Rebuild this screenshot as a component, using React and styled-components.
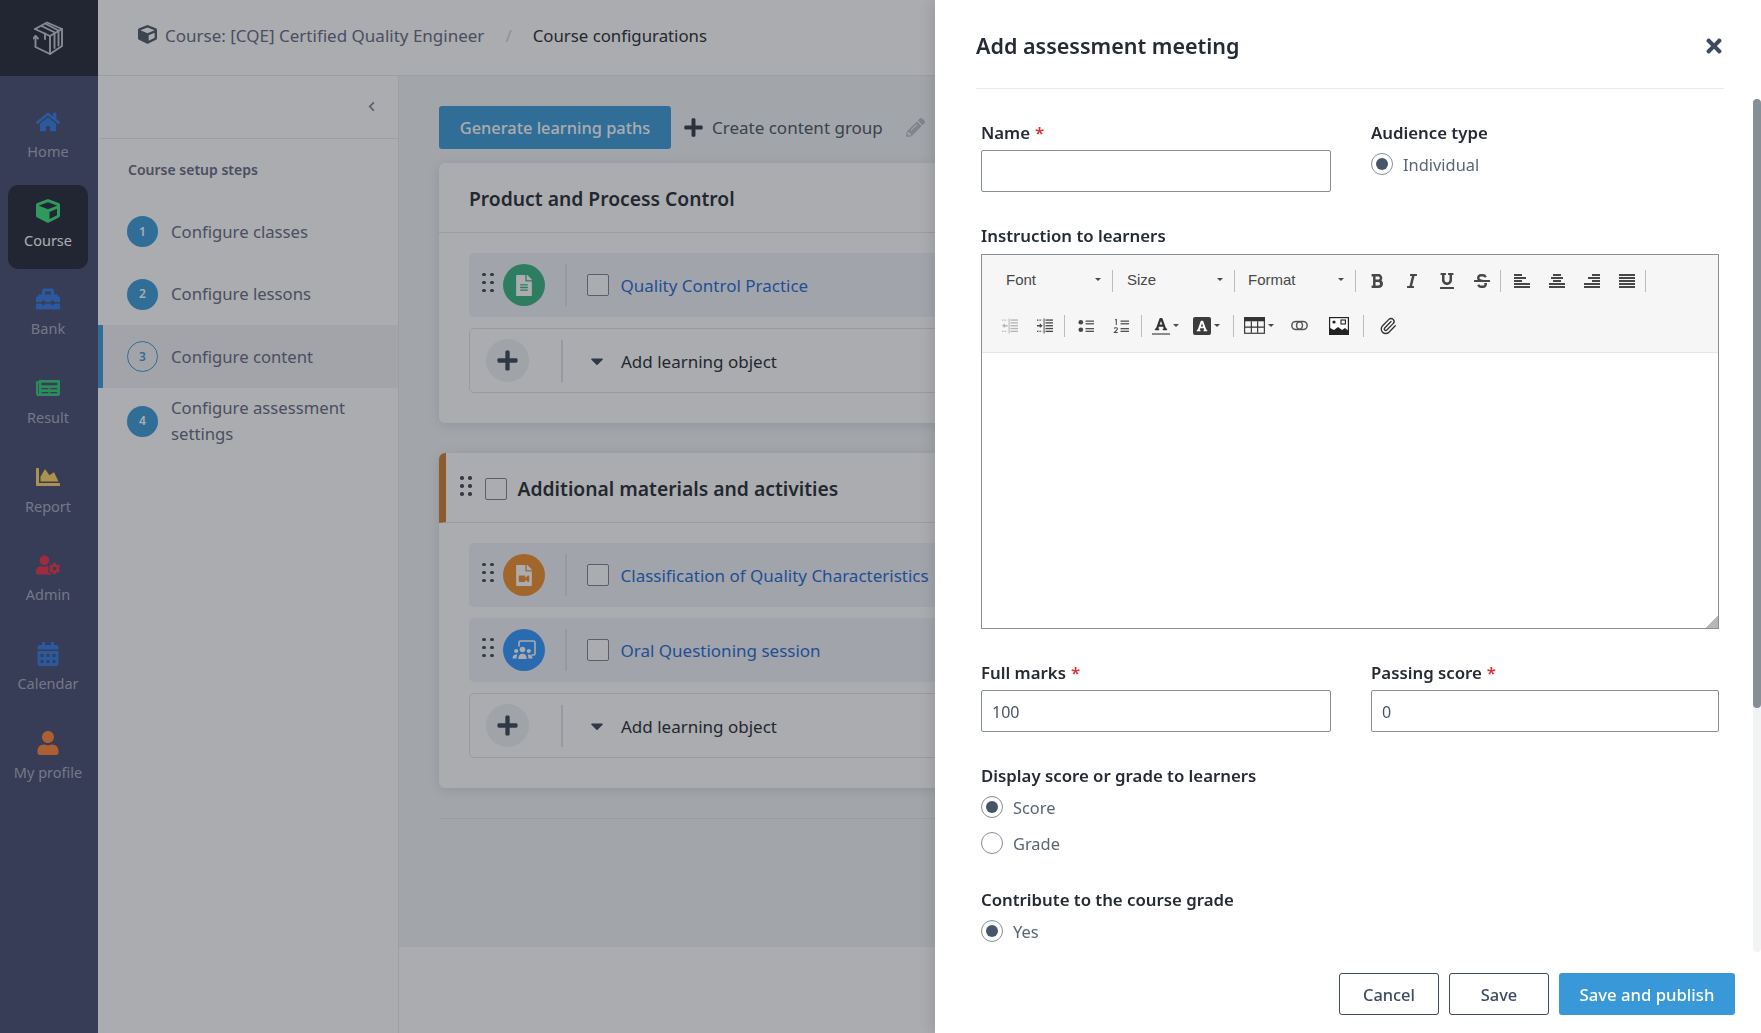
import React from 'react';
import styled, { createGlobalStyle } from 'styled-components';
import { Paperclip } from 'lucide-react';
import {
  FaHome, FaCube, FaToolbox, FaNewspaper, FaChartArea, FaUserCog, FaCalendarAlt, FaUser,
  FaChevronLeft, FaPlus, FaPencilAlt, FaFileAlt, FaFileVideo, FaCaretDown, FaTimes,
  FaBold, FaItalic, FaUnderline, FaStrikethrough, FaFont,
} from 'react-icons/fa';

const Global = createGlobalStyle`
  html, body { margin: 0; height: 100%; overflow: hidden; background: #fff; }
  #root { height: 100%; }
  * { box-sizing: border-box; }
  body { font-family: "Noto Sans", sans-serif; color: #252a33; }
`;

const Page = styled.div`display: flex; height: 1033px; width: 100%; overflow: hidden;`;

const Sidebar = styled.nav`width: 98px; flex: none; background: #464c71; display: flex; flex-direction: column;`;
const LogoBox = styled.div`height: 76px; background: #232737; display: flex; align-items: center; justify-content: center; padding-right: 1px;`;
const NavList = styled.div`display: flex; flex-direction: column; gap: 4.7px; padding: 20.5px 10px 0 8px;`;
const NavItem = styled.div`
  height: 84px; border-radius: 10px; display: flex; flex-direction: column; align-items: center;
  padding-top: 13.4px; gap: 5px; white-space: nowrap;
  background: ${p => (p.$active ? '#232737' : 'transparent')};
  color: ${p => (p.$active ? '#fff' : '#a5abc0')};
  font-size: 14.5px; line-height: 24px;
  svg { width: 24px; height: 24px; color: ${p => p.$color}; }
`;

const Right = styled.div`flex: 1; min-width: 0; display: flex; flex-direction: column;`;
const Topbar = styled.header`
  height: 76px; flex: none; border-bottom: 1px solid #e6e8eb; display: flex; align-items: center;
  padding: 0 0 4px 40px; font-size: 17px; color: #636982; white-space: nowrap;
`;
const CrumbIcon = styled(FaCube)`width: 19px; height: 19px; color: #4b5768; margin: -3px 8px 0 0;`;
const CrumbSlash = styled.span`margin: 0 21px; color: #cfd2d6;`;
const CrumbCurrent = styled.span`color: #252a33; font-size: 16.8px;`;

const Body = styled.div`flex: 1; display: flex; min-height: 0;`;
const Steps = styled.aside`width: 301px; flex: none; border-right: 1px solid #e6e8eb;`;
const CollapseBar = styled.div`
  height: 63px; margin-left: 2px; border-bottom: 1px solid #e6e8eb; display: flex; align-items: center;
  justify-content: flex-end; padding: 0 22px 2px 0; color: #7f8494;
  svg { width: 9px; height: 11px; }
`;
const StepsTitle = styled.div`padding: 19px 0 0 30px; font-size: 14px; line-height: 24px; font-weight: 600; color: #636982; height: 61.6px;`;
const StepRow = styled.div`
  min-height: ${p => (p.$tall ? 67 : 62.4)}px; display: flex; align-items: center; gap: 13px; font-size: 16.7px;
  line-height: 26px; color: #636982; padding-right: 30px;
  background: ${p => (p.$active ? '#f2f3f5' : 'transparent')};
  border-left: ${p => (p.$active ? '5px solid #3999d8' : '0')};
  padding-left: ${p => (p.$active ? '24px' : '29px')};
`;
const StepDot = styled.span`
  width: 31px; height: 31px; flex: none; border-radius: 50%; display: flex; align-items: center; justify-content: center;
  font-size: 12px; font-weight: 600;
  background: ${p => (p.$outline ? 'transparent' : '#3999d8')};
  color: ${p => (p.$outline ? '#3999d8' : '#fff')};
  border: ${p => (p.$outline ? '1px solid #3999d8' : '0')};
`;

const Main = styled.main`flex: 1; min-width: 0; display: flex; flex-direction: column;`;
const Work = styled.div`height: 871px; flex: none; background: #f1f4f7; padding: 30px 40px 0;`;
const Toolbar = styled.div`display: flex; align-items: center; height: 43px; margin-bottom: 14px;`;
const PrimaryBtn = styled.button`
  width: 232px; height: 43px; border: 0; border-radius: 3px; background: #3999d8; color: #fff; padding: 0;
  font: 500 16.4px "Noto Sans", sans-serif; white-space: nowrap; flex: none;
`;
const GhostAction = styled.span`
  display: inline-flex; align-items: center; gap: 8px; margin-left: 12px; font-size: 17px; color: #495464; white-space: nowrap;
  svg { width: 21px; height: 21px; color: #303b4d; }
`;
const PencilIcon = styled(FaPencilAlt)`width: 19px; height: 19px; margin-left: 23px; color: #bbbfc5; flex: none;`;
const Card = styled.section`
  background: #fff; border-radius: 6px; box-shadow: 0 2px 12px rgba(40,45,60,.13); margin-bottom: 30px; overflow: hidden;
`;
const CardHead = styled.div`
  height: 70px; border-bottom: 1px solid #e4e6ea; display: flex; align-items: center; padding: 2px 0 0 30px;
  font-size: 19.3px; font-weight: 600; color: #252a33; white-space: nowrap;
  ${p => p.$accent && `border-left: 7px solid #d17e2d; padding-left: 14px;`}
`;
const CardBody = styled.div`padding: 20px 0 30px 30px; display: flex; flex-direction: column; gap: 11px;`;
const ItemRow = styled.div`
  height: 64px; border-radius: 5px; background: #f0f3fa; display: flex; align-items: center; padding-left: 13px;
  font-size: 17px; color: #1e69d3; white-space: nowrap;
`;
const Dots = styled.span`
  display: grid; grid-template-columns: 3.5px 3.5px; column-gap: 4.5px; row-gap: 4.5px; flex: none; margin-top: -5px;
  margin-right: ${p => p.$mr ?? 9}px;
  i { width: 3.5px; height: 3.5px; border-radius: 50%; background: #40465a; display: block; }
`;
const KindCircle = styled.span`
  width: 42px; height: 42px; border-radius: 50%; background: ${p => p.$color}; flex: none;
  display: flex; align-items: center; justify-content: center; color: #fff;
  svg { width: 16px; height: 21px; }
`;
const Sep = styled.span`width: 2px; height: 42px; background: #dde0e6; flex: none; margin: 0 ${p => p.$r}px 0 ${p => p.$l}px;`;
const Check = styled.span`
  width: 22px; height: 22px; border: 1px solid #7c8592; border-radius: 2px; background: #fff; flex: none; margin-right: ${p => p.$mr ?? 11}px;
`;
const AddRow = styled.div`
  height: 65px; border: 1px solid #e0e3e8; border-radius: 5px; display: flex; align-items: center; padding: 1px 0 0 16px;
  font-size: 17px; color: #252a33; white-space: nowrap;
`;
const AddCircle = styled.span`
  width: 43px; height: 43px; border-radius: 50%; background: #eef0f4; flex: none; display: flex; align-items: center; justify-content: center;
  color: #364556; margin-top: -1px; svg { width: 23px; height: 23px; }
`;
const CaretIcon = styled(FaCaretDown)`width: 20px; height: 20px; color: #364556; margin-right: 14px; flex: none;`;
const Rule = styled.div`height: 1px; background: #e4e6ea;`;

const Backdrop = styled.div`position: fixed; inset: 0; background: rgba(33,37,44,.38); z-index: 5;`;
const Drawer = styled.aside`
  position: fixed; top: 0; right: 0; bottom: 0; width: 826px; background: #fff; z-index: 6; display: flex; flex-direction: column;
  box-shadow: -4px 0 12px rgba(0,0,0,.1);
`;
const DrawerHead = styled.div`
  height: 89px; flex: none; margin: 0 37px 0 41px; border-bottom: 1px solid #e9ecef; display: flex; align-items: center;
  justify-content: space-between; padding: 3px 0 0 0;
`;
const DrawerTitle = styled.h2`margin: 0; font-size: 21.5px; font-weight: 600; color: #252a33;`;
const CloseIcon = styled(FaTimes)`width: 22px; height: 22px; color: #3d4b5c; margin-right: -1px;`;
const BodyWrap = styled.div`flex: 1; min-height: 0; position: relative; overflow: hidden;`;
const DrawerBody = styled.div`padding: 32px 42px 0 46px;`;
const ScrollTrack = styled.div`position: absolute; top: 10px; bottom: 0; right: 0; width: 8px; background: #f1f3f5; border-radius: 4px;`;
const ScrollThumb = styled.div`height: 609px; background: #868e96; border-radius: 4px;`;
const TwoCols = styled.div`display: grid; grid-template-columns: 350px 348px; column-gap: 40px; margin-top: ${p => p.$mt || 0}px;`;
const Label = styled.div`font-size: 16.8px; line-height: 24px; font-weight: 600; color: #252a33; margin-bottom: ${p => p.$mb ?? 5}px; margin-top: ${p => p.$mt || 0}px; white-space: nowrap;`;
const Req = styled.span`color: #e03131; margin-left: 5px;`;
const Input = styled.input`
  display: block; width: 100%; height: 42px; border: 1px solid #868e96; border-radius: 2px; padding: 2px 10px 0;
  font: 16px "Noto Sans", sans-serif; color: #495464; background: #fff; outline: 0;
`;
const RadioRow = styled.label`display: flex; align-items: center; gap: 10px; height: 36px; font-size: 16.4px; color: #5a6573;`;
const RadioMark = styled.span`
  width: 22px; height: 22px; border-radius: 50%; border: 1px solid #868e96; display: flex; align-items: center; justify-content: center; flex: none;
  &::after { content: ''; width: 12px; height: 12px; border-radius: 50%; background: ${p => (p.$on ? '#475569' : 'transparent')}; }
`;

const Editor = styled.div`border: 1px solid #868e96; height: 375px; position: relative;`;
const EdToolbar = styled.div`height: 98px; background: #f6f6f6; border-bottom: 1px solid #e5e5e5; padding-top: 3px;`;
const EdRow = styled.div`height: 45px; display: flex; align-items: center; padding-left: ${p => p.$pl}px;`;
const Combo = styled.span`
  width: ${p => p.$w}px; display: flex; align-items: center; justify-content: space-between; padding: 0 11px 3px ${p => p.$pl}px;
  font: 15px "Liberation Sans", Arial, sans-serif; color: #484848;
  &::after { content: ''; border-left: 3px solid transparent; border-right: 3px solid transparent; border-top: 3px solid #484848; }
`;
const EdSep = styled.span`width: 1px; height: 22px; background: #bcbcbc; flex: none; margin: 0 ${p => p.$r ?? 0}px 0 ${p => p.$l ?? 0}px;`;
const EdBtn = styled.span`
  width: ${p => p.$w || 35}px; height: 26px; flex: none; display: flex; align-items: center; justify-content: center; gap: 3px;
  color: ${p => p.$color || '#474747'}; svg { flex: none; height: ${p => p.$s || 16}px; width: ${p => p.$sw || p.$s || 16}px; }
`;
const MiniCaret = styled.span`border-left: 3px solid transparent; border-right: 3px solid transparent; border-top: 3px solid #484848;`;
const ColorA = styled.span`
  display: flex; flex-direction: column; align-items: center; width: 18px; color: #333;
  border-bottom: 2px solid #8a8a8a; padding-bottom: 2px;
  svg { width: 14px; height: 14px; }
`;
const BgA = styled.span`
  width: 18px; height: 18px; background: #3c3c3c; border-radius: 2px; display: flex; align-items: center; justify-content: center; color: #fff;
  svg { width: 12px; height: 12px; }
`;
const Resizer = styled.span`
  position: absolute; right: 0; bottom: 0; width: 12px; height: 12px;
  background: linear-gradient(135deg, transparent 50%, #b7b7b7 50%);
`;
const Footer = styled.div`height: 81px; flex: none; display: flex; justify-content: flex-end; gap: 10px; padding: 21px 26px 0 0;`;
const OutlineBtn = styled.button`
  width: 100px; height: 42px; background: #fff; border: 1px solid #3d4b5c; border-radius: 3px; color: #3d4b5c;
  font: 500 16.4px "Noto Sans", sans-serif;
`;
const SolidBtn = styled.button`
  width: 176px; height: 42px; background: #3999d8; border: 0; border-radius: 3px; color: #fff;
  font: 500 16.7px "Noto Sans", sans-serif;
`;

function Logo() {
  return (
    <svg width="32" height="36" viewBox="8 6 32 36" fill="none" stroke="#c4c8d2" strokeWidth="1.9" strokeLinejoin="round" strokeLinecap="round">
      <path d="M10 15 L22 8.5 L37 15 V32 L25 40 L10.5 33 V22" />
      <path d="M10 15 L25 22 L37 15" />
      <path d="M25 22 V40" />
      <path d="M16.5 12 L30 18.5 M21 10 L33.5 16.5" />
      <path d="M20 19.5 V25 M29.5 20 V34 M33.5 17.5 V31.5" />
      <path d="M8.5 24.5 L10.5 22 L13 24.5" />
    </svg>
  );
}

function Grip({ mr }) {
  return <Dots $mr={mr}><i /><i /><i /><i /><i /><i /></Dots>;
}

function MeetingIcon() {
  return (
    <svg viewBox="0 0 24 20" fill="#fff" style={{ width: 24, height: 20 }}>
      <path d="M7 6.5 V2.5 A1.5 1.5 0 0 1 8.5 1 H21.5 A1.5 1.5 0 0 1 23 2.5 V13.5 A1.5 1.5 0 0 1 21.5 15 H19.5" fill="none" stroke="#fff" strokeWidth="1.6" />
      <circle cx="4.2" cy="11" r="2.1" />
      <circle cx="10.5" cy="9.5" r="2.8" />
      <circle cx="16.8" cy="11" r="2.1" />
      <path d="M6.2 19 c0-3.4 1.8-5.2 4.3-5.2 s4.3 1.8 4.3 5.2 Z" />
      <path d="M0.5 18.5 c0-2.6 1.4-4 3.7-4 .5 0 .9.1 1.2.2 C4.7 15.8 4.6 17 4.6 18.5 Z" />
      <path d="M20.5 18.5 c0-2.6-1.4-4-3.7-4 -.5 0-.9.1-1.2.2 .7 1.1.8 2.3.8 3.8 Z" />
    </svg>
  );
}

function AlignIcon({ kind }) {
  const widths = [8, 12, 8, 16, 16];
  const rows = kind === 'justify' ? [16, 16, 16, 16, 16] : widths;
  const xOf = w => (kind === 'center' ? (16 - w) / 2 : kind === 'right' ? 16 - w : 0);
  return (
    <svg viewBox="0 0 16 16" fill="currentColor">
      {rows.map((w, i) => <rect key={i} x={xOf(w)} y={1 + i * 3} width={w} height="2" />)}
    </svg>
  );
}

function IndentIcon({ out }) {
  return (
    <svg viewBox="0 0 17 16" fill="currentColor">
      {[1, 4, 7, 10, 13].map(y => <rect key={y} x="9" y={y} width="8" height="1.4" />)}
      <rect x="7" y="0" width="1" height="16" />
      <path d="M0 1.7h5.5M0 13.7h5.5" stroke="currentColor" strokeWidth="1.3" strokeDasharray="1.4 1.2" />
      <path d={out ? 'M0 7.7 L3 5.2 V7 H6 V8.4 H3 V10.2 Z' : 'M6 7.7 L3 5.2 V7 H0 V8.4 H3 V10.2 Z'} />
    </svg>
  );
}

function BulletIcon() {
  return (
    <svg viewBox="0 0 17 16" fill="currentColor">
      <circle cx="3" cy="4" r="2.5" /><circle cx="3" cy="12" r="2.5" />
      <rect x="8" y="2.2" width="9" height="1.3" /><rect x="8" y="5" width="9" height="1.3" />
      <rect x="8" y="10.2" width="9" height="1.3" /><rect x="8" y="13" width="9" height="1.3" />
    </svg>
  );
}

function NumberIcon() {
  return (
    <svg viewBox="0 0 17 16" fill="currentColor">
      <path d="M2 1.5 L3.5 1 V7 M1 10.5 C2 9.5 5 9.5 4.6 11.5 L1.4 15 H5" fill="none" stroke="currentColor" strokeWidth="1.1" />
      <rect x="8" y="2.2" width="9" height="1.3" /><rect x="8" y="5" width="9" height="1.3" />
      <rect x="8" y="10.2" width="9" height="1.3" /><rect x="8" y="13" width="9" height="1.3" />
    </svg>
  );
}

function TableIcon() {
  return (
    <svg viewBox="0 0 20 16" fill="none" stroke="#333" strokeWidth="1.1">
      <rect x="0.6" y="0.6" width="18.8" height="14.8" />
      <rect x="0" y="0" width="20" height="4" fill="#333" stroke="none" />
      <path d="M7 4 V15 M13 4 V15 M1 9.5 H19" />
    </svg>
  );
}

function LinkIcon() {
  return (
    <svg viewBox="0 0 16 10" fill="none" stroke="#555" strokeWidth="1.4">
      <rect x="0.8" y="1.2" width="10" height="7.6" rx="3.8" />
      <rect x="5.2" y="1.2" width="10" height="7.6" rx="3.8" />
    </svg>
  );
}

function PictureIcon() {
  return (
    <svg viewBox="0 0 20 18">
      <rect x="0.6" y="0.6" width="18.8" height="16.8" fill="#fff" stroke="#222" strokeWidth="1.2" />
      <circle cx="5" cy="5" r="1.6" fill="#222" />
      <rect x="12" y="3" width="4.4" height="4" fill="none" stroke="#222" strokeWidth="1.1" />
      <path d="M1 16.6 V11 L5 13 L9 10 L13 13 L16 11 L19 13.5 V17.4 H1 Z" fill="#222" />
    </svg>
  );
}

const navItems = [
  ['Home', FaHome, '#317ae2'],
  ['Course', FaCube, '#38e27c', true],
  ['Bank', FaToolbox, '#317ae2'],
  ['Result', FaNewspaper, '#32cb78'],
  ['Report', FaChartArea, '#ffd561'],
  ['Admin', FaUserCog, '#ee3049'],
  ['Calendar', FaCalendarAlt, '#317ae2'],
  ['My profile', FaUser, '#ff8438'],
];

export default function App() {
  return (
    <>
      <Global />
      <Page>
        <Sidebar>
          <LogoBox><Logo /></LogoBox>
          <NavList>
            {navItems.map(([label, Icon, color, active]) => (
              <NavItem key={label} $active={active} $color={color}><Icon />{label}</NavItem>
            ))}
          </NavList>
        </Sidebar>
        <Right>
          <Topbar>
            <CrumbIcon />
            <span>Course: [CQE] Certified Quality Engineer</span>
            <CrumbSlash>/</CrumbSlash>
            <CrumbCurrent>Course configurations</CrumbCurrent>
          </Topbar>
          <Body>
            <Steps>
              <CollapseBar><FaChevronLeft /></CollapseBar>
              <StepsTitle>Course setup steps</StepsTitle>
              <StepRow><StepDot>1</StepDot>Configure classes</StepRow>
              <StepRow><StepDot>2</StepDot>Configure lessons</StepRow>
              <StepRow $active><StepDot $outline>3</StepDot>Configure content</StepRow>
              <StepRow $tall><StepDot>4</StepDot>Configure assessment settings</StepRow>
            </Steps>
            <Main>
              <Work>
                <Toolbar>
                  <PrimaryBtn>Generate learning paths</PrimaryBtn>
                  <GhostAction><FaPlus />Create content group</GhostAction>
                  <PencilIcon />
                </Toolbar>
                <Card>
                  <CardHead>Product and Process Control</CardHead>
                  <CardBody>
                    <ItemRow>
                      <Grip />
                      <KindCircle $color="#38b381"><FaFileAlt /></KindCircle>
                      <Sep $l={20} $r={20} />
                      <Check $mr={12} />Quality Control Practice
                    </ItemRow>
                    <AddRow>
                      <AddCircle><FaPlus /></AddCircle>
                      <Sep $l={32} $r={24} />
                      <CaretIcon />Add learning object
                    </AddRow>
                  </CardBody>
                </Card>
                <Card>
                  <CardHead $accent>
                    <Grip mr={13} />
                    <Check $mr={11} />Additional materials and activities
                  </CardHead>
                  <CardBody>
                    <ItemRow>
                      <Grip />
                      <KindCircle $color="#ee8f2d"><FaFileVideo /></KindCircle>
                      <Sep $l={20} $r={20} />
                      <Check $mr={12} />Classification of Quality Characteristics
                    </ItemRow>
                    <ItemRow>
                      <Grip />
                      <KindCircle $color="#3096ff"><MeetingIcon /></KindCircle>
                      <Sep $l={20} $r={20} />
                      <Check $mr={12} />Oral Questioning session
                    </ItemRow>
                    <AddRow>
                      <AddCircle><FaPlus /></AddCircle>
                      <Sep $l={32} $r={24} />
                      <CaretIcon />Add learning object
                    </AddRow>
                  </CardBody>
                </Card>
                <Rule />
              </Work>
            </Main>
          </Body>
        </Right>
      </Page>
      <Backdrop />
      <Drawer>
        <DrawerHead>
          <DrawerTitle>Add assessment meeting</DrawerTitle>
          <CloseIcon />
        </DrawerHead>
        <BodyWrap>
          <DrawerBody>
            <TwoCols>
              <div>
                <Label>Name<Req>*</Req></Label>
                <Input />
              </div>
              <div>
                <Label $mb={1}>Audience type</Label>
                <RadioRow><RadioMark $on />Individual</RadioRow>
              </div>
            </TwoCols>
            <Label $mt={32} $mb={6}>Instruction to learners</Label>
            <Editor>
              <EdToolbar>
                <EdRow $pl={8}>
                  <Combo $w={122} $pl={16}>Font</Combo><EdSep />
                  <Combo $w={121} $pl={14}>Size</Combo><EdSep />
                  <Combo $w={120} $pl={13}>Format</Combo><EdSep $r={3} />
                  <EdBtn><FaBold /></EdBtn>
                  <EdBtn><FaItalic /></EdBtn>
                  <EdBtn><FaUnderline /></EdBtn>
                  <EdBtn><FaStrikethrough /></EdBtn>
                  <EdSep $l={1} $r={3} />
                  <EdBtn><AlignIcon kind="left" /></EdBtn>
                  <EdBtn><AlignIcon kind="center" /></EdBtn>
                  <EdBtn><AlignIcon kind="right" /></EdBtn>
                  <EdBtn><AlignIcon kind="justify" /></EdBtn>
                  <EdSep $l={1} />
                </EdRow>
                <EdRow $pl={10}>
                  <EdBtn $color="#b5b5b5"><IndentIcon out /></EdBtn>
                  <EdBtn><IndentIcon /></EdBtn>
                  <EdSep $l={1.5} $r={4} />
                  <EdBtn><BulletIcon /></EdBtn>
                  <EdBtn><NumberIcon /></EdBtn>
                  <EdSep $l={2} $r={4} />
                  <EdBtn $w={40}><ColorA><FaFont /></ColorA><MiniCaret /></EdBtn>
                  <EdBtn $w={42}><BgA><FaFont /></BgA><MiniCaret /></EdBtn>
                  <EdSep $l={5.5} $r={4} />
                  <EdBtn $w={42} $s={17} $sw={21}><TableIcon /><MiniCaret /></EdBtn>
                  <EdBtn $w={38} $s={11} $sw={17}><LinkIcon /></EdBtn>
                  <EdBtn $w={42} $s={18} $sw={20}><PictureIcon /></EdBtn>
                  <EdSep $l={3} $r={6} />
                  <EdBtn $color="#333" $s={18}><Paperclip strokeWidth={1.8} /></EdBtn>
                </EdRow>
              </EdToolbar>
              <Resizer />
            </Editor>
            <TwoCols $mt={32}>
              <div>
                <Label>Full marks<Req>*</Req></Label>
                <Input defaultValue="100" />
              </div>
              <div>
                <Label>Passing score<Req>*</Req></Label>
                <Input defaultValue="0" />
              </div>
            </TwoCols>
            <Label $mt={32} $mb={1}>Display score or grade to learners</Label>
            <RadioRow><RadioMark $on />Score</RadioRow>
            <RadioRow><RadioMark />Grade</RadioRow>
            <Label $mt={27} $mb={1}>Contribute to the course grade</Label>
            <RadioRow><RadioMark $on />Yes</RadioRow>
          </DrawerBody>
          <ScrollTrack><ScrollThumb /></ScrollTrack>
        </BodyWrap>
        <Footer>
          <OutlineBtn>Cancel</OutlineBtn>
          <OutlineBtn>Save</OutlineBtn>
          <SolidBtn>Save and publish</SolidBtn>
        </Footer>
      </Drawer>
    </>
  );
}
